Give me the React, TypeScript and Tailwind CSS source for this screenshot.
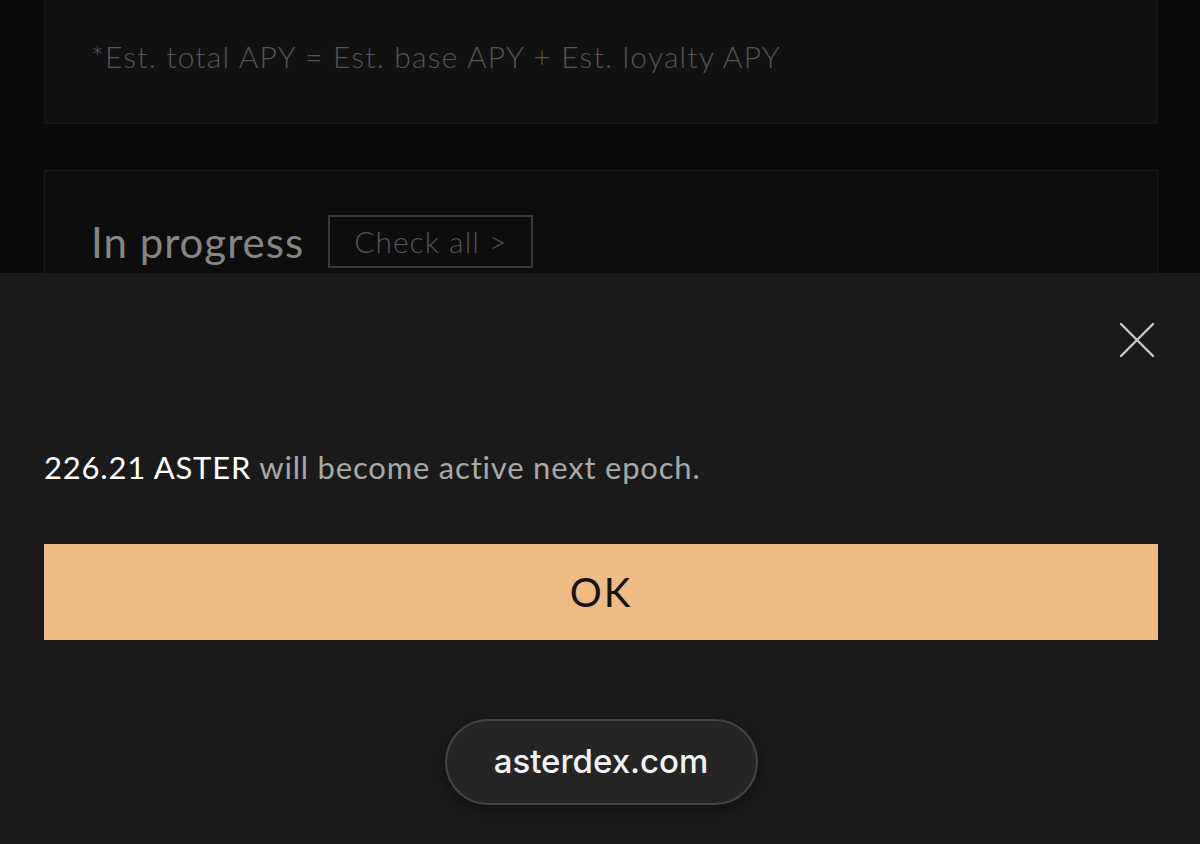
import React from "react";

export default function App() {
  return (
    <div className="relative w-[1200px] h-[844px] overflow-hidden bg-[#0a0a0a]" style={{ fontFamily: "Lato, 'Noto Sans', sans-serif" }}>
      {/* Page behind the sheet */}
      <div className="pl-[44px] pr-[42px]">
        <div className="h-[124px] bg-[#111111] border border-[#181818] border-t-0 pl-[46px] pt-[38px]">
          <p className="text-[30px] leading-[36px] tracking-[1.2px] text-[#555555] font-light">
            *Est. total APY = Est. base APY + Est. loyalty APY
          </p>
        </div>
        <div className="mt-[46px] h-[200px] bg-[#0d0d0d] border border-[#1c1c1c] pl-[46px] pt-[44px]">
          <div className="flex items-center gap-[24px]">
            <h2 className="text-[42px] leading-[52px] tracking-[1px] text-[#858585]">In progress</h2>
            <button className="h-[53px] px-[24px] border-2 border-[#3a3a3a] text-[30px] tracking-[1px] text-[#555555] font-light">
              Check all &gt;
            </button>
          </div>
        </div>
      </div>

      {/* Bottom sheet */}
      <div className="absolute left-0 right-0 top-[273px] bottom-0 bg-[#1a1a1a] pl-[44px] pr-[42px]">
        <div className="flex justify-end pt-[49px] pr-[3px]">
          <button aria-label="Close" className="w-[36px] h-[36px] text-[#c8c8c8]">
            <svg viewBox="0 0 36 36" width="36" height="36" fill="none" stroke="currentColor" strokeWidth="2.4" strokeLinecap="round">
              <path d="M2 2L34 34M34 2L2 34" />
            </svg>
          </button>
        </div>
        <p className="mt-[91px] text-[31px] leading-[36px] tracking-[0.8px] text-[#a8a8a8]">
          <span className="text-white">226.21 ASTER</span> will become active next epoch.
        </p>
        <button className="mt-[59px] w-full h-[96px] bg-[#efbb84] text-[40px] tracking-[2px] text-[#141414]">
          OK
        </button>
        <div className="flex justify-center mt-[79px]">
          <div
            className="w-[313px] h-[86px] rounded-full bg-[#252525] border-2 border-[#444444] flex items-center justify-center text-[33px] text-[#f2f2f2] font-medium shadow-[0_4px_14px_rgba(0,0,0,0.4)]"
            style={{ fontFamily: "Inter, Roboto, sans-serif" }}
          >
            asterdex.com
          </div>
        </div>
      </div>
    </div>
  );
}
